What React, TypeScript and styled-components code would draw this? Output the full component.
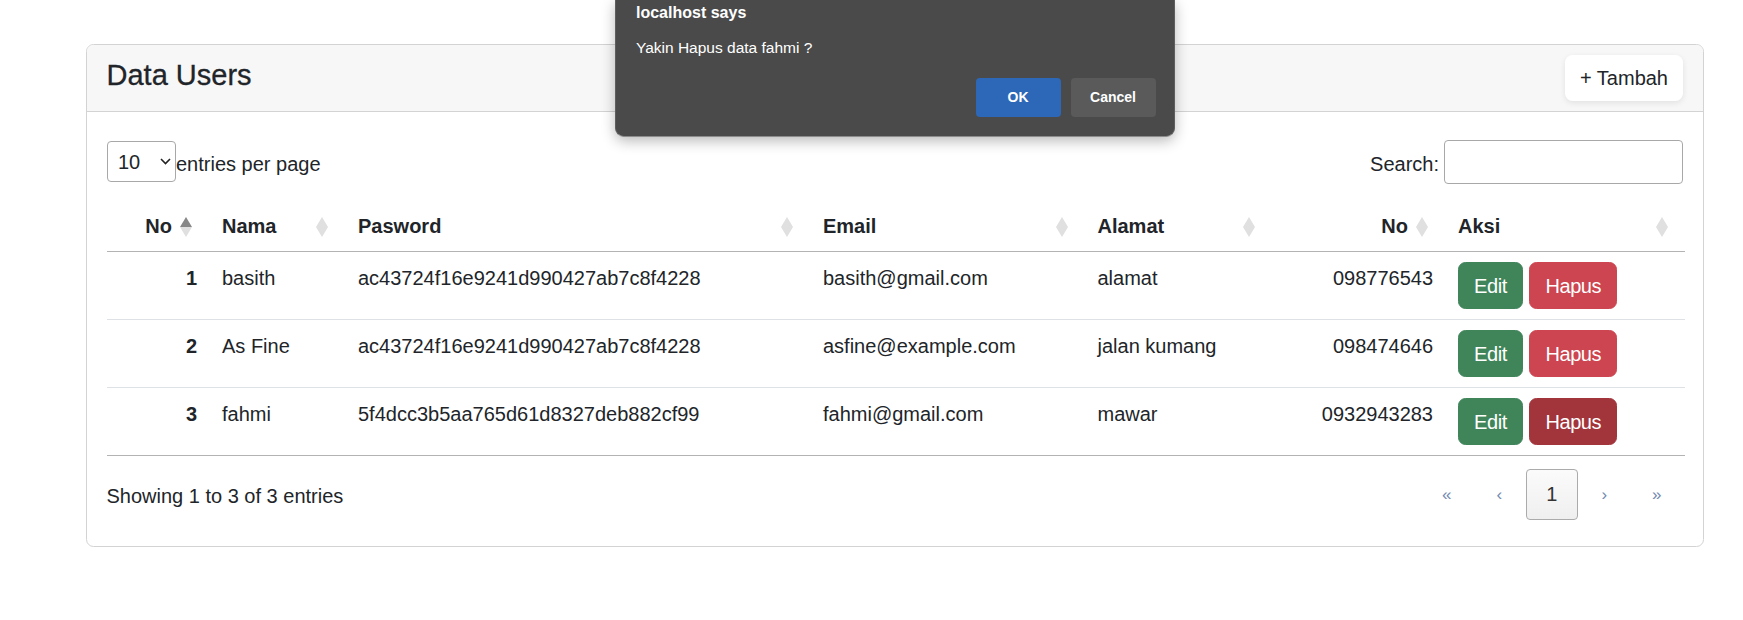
import React from "react";
import styled, { createGlobalStyle, css } from "styled-components";

const GlobalStyle = createGlobalStyle`
  html, body { margin: 0; padding: 0; background: #ffffff; }
  body {
    font-family: "Liberation Sans", Arial, sans-serif;
    color: #212529;
    font-size: 20px;
    line-height: 1.5;
  }
  * { box-sizing: border-box; }
`;

const Page = styled.div`
  position: relative;
  width: 1743px;
  height: 620px;
  overflow: hidden;
  padding: 44px 39px 0 85.5px;
`;

const Card = styled.section`
  border: 1px solid #d3d3d3;
  border-radius: 7.5px;
  background: #ffffff;
  overflow: hidden;
`;

const CardHeader = styled.header`
  display: flex;
  justify-content: space-between;
  align-items: flex-start;
  padding: 10px 20px;
  background: #f7f7f7;
  border-bottom: 1px solid #d3d3d3;
`;

const Title = styled.h4`
  margin: 2px 0 8px;
  font-size: 29px;
  line-height: 36px;
  font-weight: 400;
  color: #212529;
  -webkit-text-stroke: 0.3px #212529;
`;

const AddButton = styled.button`
  height: 46px;
  padding: 0 15px;
  border: 0;
  border-radius: 7.5px;
  background: #ffffff;
  box-shadow: 0 2px 6px rgba(0, 0, 0, 0.09);
  font-family: inherit;
  font-size: 20px;
  color: #212529;
  cursor: pointer;
`;

const CardBody = styled.div`
  padding: 20px;
`;

const TopBar = styled.div`
  display: flex;
  justify-content: space-between;
  align-items: center;
  padding: 7.5px 0 16.5px;
`;

const PerPage = styled.label`
  display: flex;
  align-items: center;
`;

const BarText = styled.span`
  position: relative;
  top: 2px;
`;

const SelectWrap = styled.span`
  position: relative;
  display: inline-block;
  width: 69.5px;
  height: 41px;
`;

const Select = styled.select`
  appearance: none;
  width: 100%;
  height: 100%;
  padding: 0 0 0 10.5px;
  border: 1px solid #a8a8a8;
  border-radius: 4px;
  background: #ffffff;
  font-family: inherit;
  font-size: 20px;
  color: #212529;
`;

const Chevron = styled.svg`
  position: absolute;
  right: 5px;
  top: 17px;
  pointer-events: none;
`;

const SearchLabel = styled.label`
  display: flex;
  align-items: center;
  gap: 5px;
`;

const SearchInput = styled.input`
  width: 239px;
  height: 44.5px;
  border: 1px solid #a8a8a8;
  border-radius: 4px;
  padding: 0 10px;
  font-family: inherit;
  font-size: 20px;
`;

const Table = styled.table`
  width: 100%;
  border-collapse: collapse;
  table-layout: fixed;
`;

type AlignProps = { $align?: "left" | "right" };

const Th = styled.th<AlignProps>`
  padding: 10px 12.5px;
  text-align: ${(p) => p.$align ?? "left"};
  font-weight: 700;
  line-height: 30px;
  vertical-align: bottom;
  border-bottom: 1px solid #b3b3b3;
`;

const Sorter = styled.span<{ $active?: boolean }>`
  position: relative;
  display: block;
  padding-right: 25px;

  &::before,
  &::after {
    content: "";
    position: absolute;
    right: 5px;
    width: 0;
    height: 0;
    border-left: 6.5px solid transparent;
    border-right: 6.5px solid transparent;
  }
  &::before {
    top: calc(50% - 9px);
    border-bottom: 10px solid ${(p) => (p.$active ? "#878787" : "#e0e0e0")};
  }
  &::after {
    top: calc(50% + 1px);
    border-top: 10px solid #e0e0e0;
  }
`;

const Row = styled.tr<{ $last?: boolean }>`
  & > td {
    border-bottom: 1px solid ${(p) => (p.$last ? "#b3b3b3" : "#dee2e6")};
  }
`;

const Td = styled.td<AlignProps & { $bold?: boolean }>`
  padding: 10px 12.5px;
  text-align: ${(p) => p.$align ?? "left"};
  font-weight: ${(p) => (p.$bold ? 700 : 400)};
  line-height: 30px;
  vertical-align: top;
  white-space: nowrap;
`;

const CellText = styled.span`
  position: relative;
  top: 1px;
`;

const Actions = styled.div`
  display: flex;
  gap: 6.5px;
`;

const variants = {
  edit: css`
    background: #40855a;
    border-color: #40855a;
  `,
  delete: css`
    background: #cc4550;
    border-color: #cc4550;
  `,
  deleteActive: css`
    background: #a2353c;
    border-color: #a2353c;
  `,
};

const ActionButton = styled.button<{ $variant: keyof typeof variants }>`
  height: 47px;
  padding: 2px 15px 0;
  border: 1px solid transparent;
  border-radius: 7.5px;
  color: #ffffff;
  font-family: inherit;
  font-size: 20px;
  line-height: 43px;
  letter-spacing: -0.4px;
  cursor: pointer;
  ${(p) => variants[p.$variant]}
`;

const Bottom = styled.div`
  display: flex;
  justify-content: space-between;
  align-items: center;
  padding: 13px 0 6px;
`;

const Info = styled.div`
  line-height: 30px;
  position: relative;
  top: 2px;
`;

const Pagination = styled.ul`
  display: flex;
  list-style: none;
  margin: 0;
  padding: 0;
`;

const PageItem = styled.li<{ $active?: boolean }>`
  width: 52.5px;
  height: 51.5px;
  display: flex;
  align-items: center;
  justify-content: center;
  border-radius: 4px;
  font-size: ${(p) => (p.$active ? "20px" : "17px")};
  color: ${(p) => (p.$active ? "#333333" : "#7289b0")};
  ${(p) =>
    p.$active &&
    css`
      border: 1px solid #ababab;
      background: linear-gradient(#fbfbfb, #efefef);
    `}
`;

const Dialog = styled.div`
  position: absolute;
  top: 0;
  left: 614.5px;
  width: 560px;
  height: 137px;
  display: flex;
  flex-direction: column;
  padding: 3px 18px 19px 20.5px;
  background: #4a4a4a;
  border: 1px solid #5e5e5e;
  border-top: 0;
  border-bottom-color: #8c8c8c;
  border-radius: 0 0 9px 9px;
  box-shadow: 0 4px 14px rgba(0, 0, 0, 0.28);
  color: #ffffff;
`;

const DialogTitle = styled.div`
  font-size: 16px;
  font-weight: 700;
  line-height: 20px;
`;

const DialogMessage = styled.div`
  margin-top: 15px;
  font-size: 15.5px;
  line-height: 20px;
`;

const DialogActions = styled.div`
  display: flex;
  justify-content: flex-end;
  gap: 10px;
  margin-top: auto;
`;

const DialogButton = styled.button<{ $primary?: boolean }>`
  width: 85px;
  height: 39.5px;
  border: 0;
  border-radius: 4px;
  background: ${(p) => (p.$primary ? "#2d68b8" : "#5a5a5a")};
  color: #ffffff;
  font-family: inherit;
  font-size: 14px;
  font-weight: 700;
`;

const columns = [
  { label: "No", width: 103, align: "right" as const, active: true },
  { label: "Nama", width: 136 },
  { label: "Pasword", width: 465 },
  { label: "Email", width: 274.5 },
  { label: "Alamat", width: 187 },
  { label: "No", width: 173.5, align: "right" as const },
  { label: "Aksi", width: 239.5 },
];

const users = [
  {
    no: 1,
    nama: "basith",
    pass: "ac43724f16e9241d990427ab7c8f4228",
    email: "basith@gmail.com",
    alamat: "alamat",
    hp: "098776543",
  },
  {
    no: 2,
    nama: "As Fine",
    pass: "ac43724f16e9241d990427ab7c8f4228",
    email: "asfine@example.com",
    alamat: "jalan kumang",
    hp: "098474646",
  },
  {
    no: 3,
    nama: "fahmi",
    pass: "5f4dcc3b5aa765d61d8327deb882cf99",
    email: "fahmi@gmail.com",
    alamat: "mawar",
    hp: "0932943283",
  },
];

export default function App() {
  return (
    <Page>
      <GlobalStyle />
      <Card>
        <CardHeader>
          <Title>Data Users</Title>
          <AddButton>+ Tambah</AddButton>
        </CardHeader>
        <CardBody>
          <TopBar>
            <PerPage>
              <SelectWrap>
                <Select defaultValue="10">
                  <option value="5">5</option>
                  <option value="10">10</option>
                  <option value="15">15</option>
                  <option value="20">20</option>
                </Select>
                <Chevron width="11" height="7" viewBox="0 0 11 7">
                  <path d="M1 1l4.5 4.5L10 1" fill="none" stroke="#222" strokeWidth="1.6" />
                </Chevron>
              </SelectWrap>
              <BarText>entries per page</BarText>
            </PerPage>
            <SearchLabel>
              <BarText>Search:</BarText>
              <SearchInput type="search" />
            </SearchLabel>
          </TopBar>
          <Table>
            <colgroup>
              {columns.map((c, i) => (
                <col key={i} style={{ width: c.width }} />
              ))}
            </colgroup>
            <thead>
              <tr>
                {columns.map((c, i) => (
                  <Th key={i} $align={c.align}>
                    <Sorter $active={c.active}>{c.label}</Sorter>
                  </Th>
                ))}
              </tr>
            </thead>
            <tbody>
              {users.map((u, i) => (
                <Row key={u.no} $last={i === users.length - 1}>
                  <Td $align="right" $bold>
                    <CellText>{u.no}</CellText>
                  </Td>
                  <Td>
                    <CellText>{u.nama}</CellText>
                  </Td>
                  <Td>
                    <CellText>{u.pass}</CellText>
                  </Td>
                  <Td>
                    <CellText>{u.email}</CellText>
                  </Td>
                  <Td>
                    <CellText>{u.alamat}</CellText>
                  </Td>
                  <Td $align="right">
                    <CellText>{u.hp}</CellText>
                  </Td>
                  <Td>
                    <Actions>
                      <ActionButton $variant="edit">Edit</ActionButton>
                      <ActionButton $variant={i === 2 ? "deleteActive" : "delete"}>Hapus</ActionButton>
                    </Actions>
                  </Td>
                </Row>
              ))}
            </tbody>
          </Table>
          <Bottom>
            <Info>Showing 1 to 3 of 3 entries</Info>
            <Pagination>
              <PageItem>«</PageItem>
              <PageItem>‹</PageItem>
              <PageItem $active>1</PageItem>
              <PageItem>›</PageItem>
              <PageItem>»</PageItem>
            </Pagination>
          </Bottom>
        </CardBody>
      </Card>
      <Dialog role="alertdialog">
        <DialogTitle>localhost says</DialogTitle>
        <DialogMessage>Yakin Hapus data fahmi ?</DialogMessage>
        <DialogActions>
          <DialogButton $primary>OK</DialogButton>
          <DialogButton>Cancel</DialogButton>
        </DialogActions>
      </Dialog>
    </Page>
  );
}
